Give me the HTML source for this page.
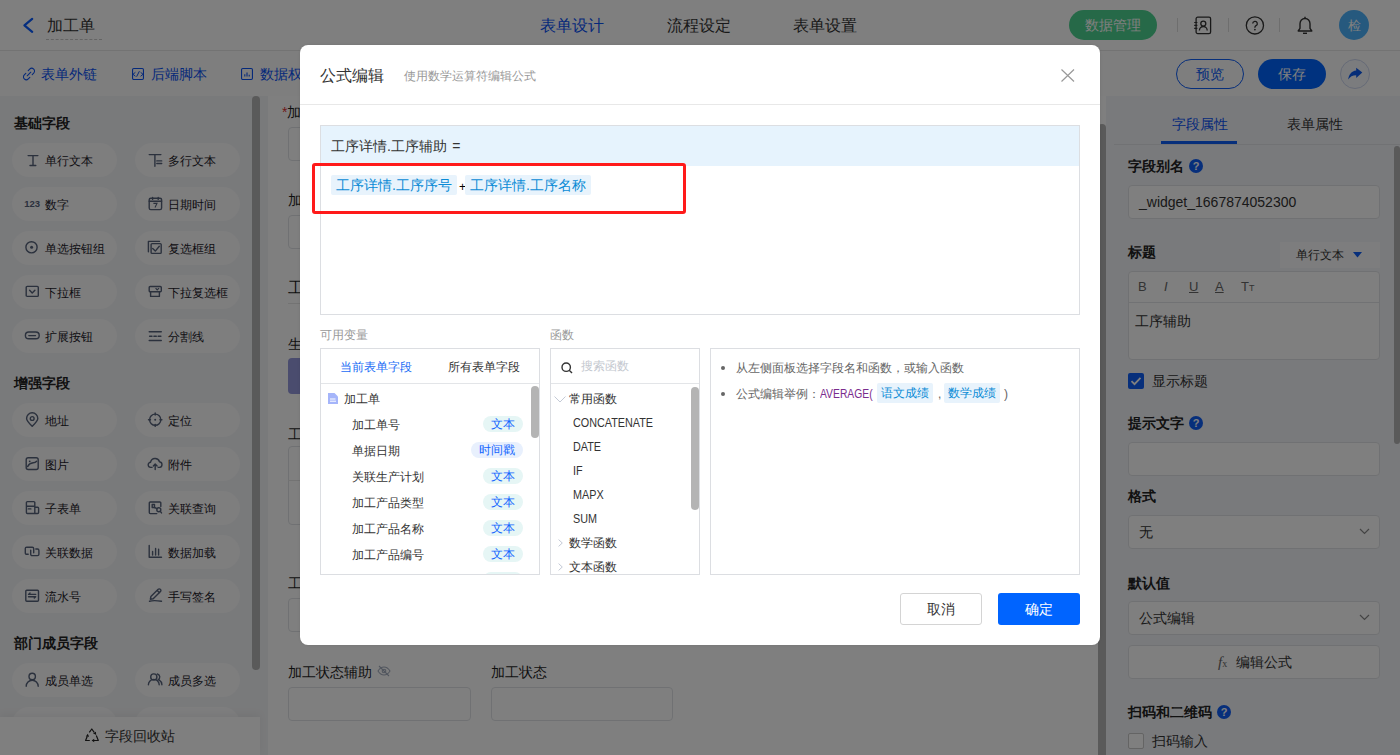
<!DOCTYPE html>
<html><head><meta charset="utf-8">
<style>
*{box-sizing:border-box;margin:0;padding:0}
html,body{width:1400px;height:755px;overflow:hidden;background:#fff}
body{font-family:"Liberation Sans",sans-serif;color:#333;position:relative}
.a{position:absolute;white-space:nowrap}
svg{display:block}
/* page */
#hdr{left:0;top:0;width:1400px;height:51px;background:#fff;border-bottom:1px solid #e6e6e6}
#tb{left:0;top:51px;width:1400px;height:45px;background:#fcfcfc}
#side{left:0;top:96px;width:268px;height:659px;background:#f3f4f6}
#canvas{left:268px;top:96px;width:838px;height:659px;background:#fff}
#rp{left:1106px;top:96px;width:294px;height:659px;background:#f3f5f9}
.t16{font-size:16px;line-height:20px}
.t14{font-size:14px;line-height:18px}
.t13{font-size:13px;line-height:16px}
.t12{font-size:12px;line-height:16px}
.pill{width:105px;height:34px;border-radius:17px;background:#fcfcfd}
.pill .ic{position:absolute;left:15px;top:10px;width:14px;height:14px}
.pill span{position:absolute;left:33px;top:9px;font-size:12px;line-height:18px;color:#1d2129}
.sech{font-size:14px;font-weight:bold;line-height:20px;color:#222}
.blue{color:#0a52f5}
.inp{background:#fff;border:1px solid #e1e3e6;border-radius:4px}
.lbl{font-size:14px;font-weight:500;line-height:20px;color:#1f1f1f}
#mask{left:0;top:0;width:1400px;height:755px;background:rgba(0,0,0,.5)}
/* dialog */
#dlg{left:300px;top:45px;width:800px;height:600px;background:#fff;border-radius:8px;box-shadow:0 0 3px rgba(0,0,0,.1)}
.box{border:1px solid #dcdee2}
.tag{background:#e8f3fc;color:#0a8bd6;border-radius:2px}
.vt{position:absolute;left:31px;margin-top:1px;font-size:12px;line-height:26px;color:#333}
.vtag{position:absolute;right:16px;height:16px;margin-top:-2px;border-radius:8px;font-size:12px;line-height:16px;padding:0 8px;color:#1466ff;background:#e6f6f5}
.fn{position:absolute;left:22px;font-size:12px;line-height:24px;color:#333;transform:scaleX(.9);transform-origin:0 0}
</style></head><body>
<!-- ============ PAGE ============ -->
<div id="hdr" class="a"></div>
<svg class="a" style="left:22px;top:17px" width="14" height="18" viewBox="0 0 14 18"><polyline points="10.2,1.9 2.4,8.4 10.2,14.9" fill="none" stroke="#0a5cff" stroke-width="2.2" stroke-linecap="round" stroke-linejoin="round"/></svg>
<div class="a t16" style="left:47px;top:16px;color:#333">加工单</div>
<div class="a" style="left:46px;top:39px;width:56px;border-top:1px dashed #c8c8c8"></div>
<div class="a t16 blue" style="left:540px;top:16px">表单设计</div>
<div class="a t16" style="left:667px;top:16px">流程设定</div>
<div class="a t16" style="left:793px;top:16px">表单设置</div>
<div class="a" style="left:1069px;top:10px;width:88px;height:30px;border-radius:15px;background:#4cd290;color:#fff;font-size:14px;line-height:30px;text-align:center">数据管理</div>
<div class="a" style="left:1177px;top:18px;width:1px;height:14px;background:#ddd"></div>
<div class="a" style="left:1228px;top:18px;width:1px;height:14px;background:#ddd"></div>
<div class="a" style="left:1279px;top:18px;width:1px;height:14px;background:#ddd"></div>
<svg class="a" style="left:1193px;top:15px" width="20" height="20" viewBox="0 0 20 20"><rect x="3.1" y="2.2" width="14.5" height="16.4" rx="1.6" fill="none" stroke="#333" stroke-width="1.3"/><path d="M1.2 7.5h3.2M1.2 10.4h3.2M1.2 13.3h3.2" stroke="#333" stroke-width="1.2"/><circle cx="10.3" cy="8.6" r="2.5" fill="none" stroke="#333" stroke-width="1.3"/><path d="M6.4 15.4a3.9 3.9 0 0 1 7.8 0" fill="none" stroke="#333" stroke-width="1.3"/></svg>
<svg class="a" style="left:1245px;top:15px" width="20" height="20" viewBox="0 0 20 20"><circle cx="9.9" cy="10.4" r="8.6" fill="none" stroke="#333" stroke-width="1.3"/><path d="M7.7 8.6a2.3 2.3 0 1 1 3.3 2.1c-.6.3-1.1.8-1.1 1.5v.5" fill="none" stroke="#333" stroke-width="1.3"/><circle cx="9.9" cy="14.6" r=".85" fill="#333"/></svg>
<svg class="a" style="left:1297px;top:16px" width="16" height="19" viewBox="0 0 16 19"><path d="M8 2.5c-3 0-5 2.3-5 5.3v4.5L1.2 15h13.6L13 12.3V7.8c0-3-2-5.3-5-5.3z" fill="none" stroke="#333" stroke-width="1.4" stroke-linejoin="round"/><path d="M6 17.3h4" stroke="#333" stroke-width="1.4"/><path d="M8 0.8v1.7" stroke="#333" stroke-width="1.4"/></svg>
<div class="a" style="left:1339px;top:10px;width:30px;height:30px;border-radius:15px;background:#4cb2fc;color:#fff;font-size:13px;line-height:32px;text-align:center">检</div>

<div id="tb" class="a"></div>
<svg class="a" style="left:22px;top:67px" width="14" height="14" viewBox="0 0 14 14"><path d="M6.2 3.6l1.5-1.5a2.8 2.8 0 0 1 4 4L10.2 7.6M7.8 10.4l-1.5 1.5a2.8 2.8 0 0 1-4-4L3.8 6.4M5.2 8.8l3.6-3.6" fill="none" stroke="#0a52f5" stroke-width="1.05" stroke-linecap="round"/></svg>
<div class="a t14 blue" style="left:41px;top:65px">表单外链</div>
<svg class="a" style="left:132px;top:68px" width="12" height="12" viewBox="0 0 12 12"><rect x=".55" y=".55" width="10.9" height="10.9" rx="1.2" fill="none" stroke="#0a52f5" stroke-width="1.1"/><path d="M3.4 4.3L1 6.3l2.4 2M4.6 8.7L7.4 3.2M8.6 4.3L11 6.3l-2.4 2" fill="none" stroke="#0a52f5" stroke-width="1"/></svg>
<div class="a t14 blue" style="left:151px;top:65px">后端脚本</div>
<svg class="a" style="left:241px;top:68px" width="12" height="12" viewBox="0 0 12 12"><rect x=".55" y=".55" width="10.9" height="10.9" rx="1.2" fill="none" stroke="#0a52f5" stroke-width="1.1"/><path d="M3.8 8.6V6.2M6 8.6V4.4M8.2 8.6V6.8" stroke="#0a52f5" stroke-width="1.1"/></svg>
<div class="a t14 blue" style="left:260px;top:65px">数据权限</div>
<div class="a" style="left:1176px;top:59px;width:68px;height:30px;border:1px solid #0f5ef7;border-radius:15px;color:#0f5ef7;font-size:14px;line-height:28px;text-align:center">预览</div>
<div class="a" style="left:1258px;top:59px;width:68px;height:30px;background:#0064ff;border-radius:15px;color:#fff;font-size:14px;line-height:30px;text-align:center">保存</div>
<div class="a" style="left:1340px;top:59px;width:30px;height:30px;border:1px solid #cdd6ee;background:#f6f8fd;border-radius:15px"></div>
<svg class="a" style="left:1346px;top:65px" width="18" height="18" viewBox="0 0 18 18"><path d="M10.2 2.7l6.1 4.8-6.1 5.5V10.2c-3.6 0-6.2 1.4-8 4.4.5-5 3.3-8.6 8-9.2z" fill="#0a5af0"/></svg>

<!-- sidebar -->
<div id="side" class="a"></div>
<div class="a sech" style="left:14px;top:113px">基础字段</div>
<div class="a pill" style="left:12px;top:143px"><svg class="a" style="left:10px;top:7px" width="20" height="20" viewBox="0 0 20 20"><path d="M6.1 5.6h9.8M11 5.6v9.9M8 15.5h5.8" fill="none" stroke="#56627a" stroke-width="1.4" stroke-linecap="round" stroke-linejoin="round"/></svg><span>单行文本</span></div>
<div class="a pill" style="left:135px;top:143px"><svg class="a" style="left:10px;top:7px" width="20" height="20" viewBox="0 0 20 20"><path d="M4.2 4.6h11.7M9.9 4.6v11.6M11.8 10.9h4.9M11.8 13.5h4.9" fill="none" stroke="#56627a" stroke-width="1.4" stroke-linecap="round" stroke-linejoin="round"/></svg><span>多行文本</span></div>
<div class="a pill" style="left:12px;top:187px"><svg class="a" style="left:10px;top:7px" width="20" height="20" viewBox="0 0 20 20"><text x="10.2" y="12.8" text-anchor="middle" font-family="Liberation Sans" font-weight="bold" font-size="9.5" fill="#56627a">123</text></svg><span>数字</span></div>
<div class="a pill" style="left:135px;top:187px"><svg class="a" style="left:10px;top:7px" width="20" height="20" viewBox="0 0 20 20"><rect x="4.2" y="4.2" width="12.4" height="11.4" rx="1.6" fill="none" stroke="#56627a" stroke-width="1.4" stroke-linecap="round" stroke-linejoin="round"/><path d="M4.2 7.3h12.4M7.6 3.4v2M13.2 3.4v2" fill="none" stroke="#56627a" stroke-width="1.4" stroke-linecap="round" stroke-linejoin="round"/><path d="M8.4 9.4h3.6l-2 4.2" fill="none" stroke="#56627a" stroke-width="1.1"/></svg><span>日期时间</span></div>
<div class="a pill" style="left:12px;top:231px"><svg class="a" style="left:10px;top:7px" width="20" height="20" viewBox="0 0 20 20"><circle cx="9.5" cy="9.3" r="5.6" fill="none" stroke="#56627a" stroke-width="1.4" stroke-linecap="round" stroke-linejoin="round"/><circle cx="9.6" cy="9.3" r="1.5" fill="#56627a"/></svg><span>单选按钮组</span></div>
<div class="a pill" style="left:135px;top:231px"><svg class="a" style="left:10px;top:7px" width="20" height="20" viewBox="0 0 20 20"><path d="M3.4 13.8V3.4h11.1" fill="none" stroke="#56627a" stroke-width="1.4" stroke-linecap="round" stroke-linejoin="round"/><rect x="6.1" y="5.6" width="10.1" height="9.8" rx="1" fill="none" stroke="#56627a" stroke-width="1.4" stroke-linecap="round" stroke-linejoin="round"/><path d="M7.7 10.5l2.6 2.6 4-4.9" fill="none" stroke="#56627a" stroke-width="1.4" stroke-linecap="round" stroke-linejoin="round"/></svg><span>复选框组</span></div>
<div class="a pill" style="left:12px;top:275px"><svg class="a" style="left:10px;top:7px" width="20" height="20" viewBox="0 0 20 20"><rect x="4.2" y="4.4" width="12.1" height="10" rx="1" fill="none" stroke="#56627a" stroke-width="1.4" stroke-linecap="round" stroke-linejoin="round"/><path d="M7.6 8.2l2.6 2.7 2.7-2.7" fill="none" stroke="#56627a" stroke-width="1.4" stroke-linecap="round" stroke-linejoin="round"/></svg><span>下拉框</span></div>
<div class="a pill" style="left:135px;top:275px"><svg class="a" style="left:10px;top:7px" width="20" height="20" viewBox="0 0 20 20"><rect x="4.2" y="4.5" width="12.1" height="5.3" rx="1" fill="none" stroke="#56627a" stroke-width="1.4" stroke-linecap="round" stroke-linejoin="round"/><path d="M5.6 9.8v4.6h8.8V9.8" fill="none" stroke="#56627a" stroke-width="1.4" stroke-linecap="round" stroke-linejoin="round"/><path d="M10.6 6.2l1.6 1.8 1.8-1.8" fill="none" stroke="#56627a" stroke-width="1.2"/></svg><span>下拉复选框</span></div>
<div class="a pill" style="left:12px;top:319px"><svg class="a" style="left:10px;top:7px" width="20" height="20" viewBox="0 0 20 20"><rect x="3.4" y="6" width="13.8" height="6.8" rx="3.4" fill="none" stroke="#56627a" stroke-width="1.4" stroke-linecap="round" stroke-linejoin="round"/><path d="M6.8 9.6h6.7" fill="none" stroke="#56627a" stroke-width="1.4" stroke-linecap="round" stroke-linejoin="round"/></svg><span>扩展按钮</span></div>
<div class="a pill" style="left:135px;top:319px"><svg class="a" style="left:10px;top:7px" width="20" height="20" viewBox="0 0 20 20"><path d="M4.2 5.7h12.1M4.2 14.5h12.1" fill="none" stroke="#56627a" stroke-width="1.4" stroke-linecap="round" stroke-linejoin="round"/><path d="M4.6 10.2h2.4M8.9 10.2h2.4M13.1 10.2h2.8" fill="none" stroke="#56627a" stroke-width="1.4" stroke-linecap="round" stroke-linejoin="round"/></svg><span>分割线</span></div>
<div class="a sech" style="left:14px;top:373px">增强字段</div>
<div class="a pill" style="left:12px;top:403px"><svg class="a" style="left:10px;top:7px" width="20" height="20" viewBox="0 0 20 20"><path d="M10.2 16.3C7 13 4.6 10.6 4.6 8.4a5.6 5.6 0 0 1 11.2 0c0 2.2-2.4 4.6-5.6 7.9z" fill="none" stroke="#56627a" stroke-width="1.4" stroke-linecap="round" stroke-linejoin="round"/><circle cx="10.2" cy="8.5" r="1.9" fill="none" stroke="#56627a" stroke-width="1.4" stroke-linecap="round" stroke-linejoin="round"/></svg><span>地址</span></div>
<div class="a pill" style="left:135px;top:403px"><svg class="a" style="left:10px;top:7px" width="20" height="20" viewBox="0 0 20 20"><circle cx="10.2" cy="9.7" r="5.6" fill="none" stroke="#56627a" stroke-width="1.4" stroke-linecap="round" stroke-linejoin="round"/><path d="M10.2 3v2M10.2 14.4v2M3.5 9.7h2M14.9 9.7h2" fill="none" stroke="#56627a" stroke-width="1.4" stroke-linecap="round" stroke-linejoin="round"/><circle cx="10.2" cy="9.7" r="1" fill="#56627a"/></svg><span>定位</span></div>
<div class="a pill" style="left:12px;top:447px"><svg class="a" style="left:10px;top:7px" width="20" height="20" viewBox="0 0 20 20"><rect x="4.2" y="3.7" width="12" height="11.8" rx="2" fill="none" stroke="#56627a" stroke-width="1.4" stroke-linecap="round" stroke-linejoin="round"/><path d="M5.6 12.6c1.5-3.2 4-3.6 5.6-3.8 1.5-.2 2.5-.6 3.4-1.6" fill="none" stroke="#56627a" stroke-width="1.4" stroke-linecap="round" stroke-linejoin="round"/><circle cx="7.7" cy="7.3" r=".9" fill="#56627a"/></svg><span>图片</span></div>
<div class="a pill" style="left:135px;top:447px"><svg class="a" style="left:10px;top:7px" width="20" height="20" viewBox="0 0 20 20"><path d="M7 13.4H6a2.6 2.6 0 0 1-.4-5.2 4.6 4.6 0 0 1 8.9-.5 2.9 2.9 0 0 1 .2 5.7h-1.5" fill="none" stroke="#56627a" stroke-width="1.4" stroke-linecap="round" stroke-linejoin="round"/><path d="M10.2 15.5v-5M8.3 12l1.9-1.9 1.9 1.9" fill="none" stroke="#56627a" stroke-width="1.4" stroke-linecap="round" stroke-linejoin="round"/></svg><span>附件</span></div>
<div class="a pill" style="left:12px;top:491px"><svg class="a" style="left:10px;top:7px" width="20" height="20" viewBox="0 0 20 20"><path d="M12.8 9.3V4.6a1 1 0 0 0-1-1H5.4a1 1 0 0 0-1 1v9.9a1 1 0 0 0 1 1h10.2a1 1 0 0 0 1-1V10.3a1 1 0 0 0-1-1h-2.8v6.2M4.4 8.2h8.4M6.3 10.9h2.6" fill="none" stroke="#56627a" stroke-width="1.4" stroke-linecap="round" stroke-linejoin="round"/></svg><span>子表单</span></div>
<div class="a pill" style="left:135px;top:491px"><svg class="a" style="left:10px;top:7px" width="20" height="20" viewBox="0 0 20 20"><path d="M15.8 8.4V5a1 1 0 0 0-1-1H5.3a1 1 0 0 0-1 1v9.6a1 1 0 0 0 1 1h6.5" fill="none" stroke="#56627a" stroke-width="1.4" stroke-linecap="round" stroke-linejoin="round"/><rect x="7.2" y="6.5" width="2.3" height="3" fill="none" stroke="#56627a" stroke-width="1.4" stroke-linecap="round" stroke-linejoin="round"/><circle cx="13.8" cy="11.8" r="2" fill="none" stroke="#56627a" stroke-width="1.4" stroke-linecap="round" stroke-linejoin="round"/><path d="M9.5 9.5l2.6 1.2M15.2 13.3l1.3 1.6" fill="none" stroke="#56627a" stroke-width="1.4" stroke-linecap="round" stroke-linejoin="round"/></svg><span>关联查询</span></div>
<div class="a pill" style="left:12px;top:535px"><svg class="a" style="left:10px;top:7px" width="20" height="20" viewBox="0 0 20 20"><path d="M6.2 12.3H4.7a1.4 1.4 0 0 1-1.4-1.4V6.6a1.4 1.4 0 0 1 1.4-1.4h5.6a1.4 1.4 0 0 1 1.4 1.4v4.1M8.7 8.2v4a1.4 1.4 0 0 0 1.4 1.4h5.4a1.4 1.4 0 0 0 1.4-1.4V8.4A1.4 1.4 0 0 0 15.5 7h-1.7" fill="none" stroke="#56627a" stroke-width="1.4" stroke-linecap="round" stroke-linejoin="round"/></svg><span>关联数据</span></div>
<div class="a pill" style="left:135px;top:535px"><svg class="a" style="left:10px;top:7px" width="20" height="20" viewBox="0 0 20 20"><path d="M4.2 3.4v11.9h12.3M7.6 9.4v3.6M10.6 6.4v6.6M13.6 7.2v5.8" fill="none" stroke="#56627a" stroke-width="1.4" stroke-linecap="round" stroke-linejoin="round"/></svg><span>数据加载</span></div>
<div class="a pill" style="left:12px;top:579px"><svg class="a" style="left:10px;top:7px" width="20" height="20" viewBox="0 0 20 20"><rect x="3.8" y="4.3" width="12.7" height="10.9" rx="1" fill="none" stroke="#56627a" stroke-width="1.4" stroke-linecap="round" stroke-linejoin="round"/><path d="M8 7l-1.5 1.4h7.2M12.3 12l1.4-1.3H6.5" fill="none" stroke="#56627a" stroke-width="1.4" stroke-linecap="round" stroke-linejoin="round"/></svg><span>流水号</span></div>
<div class="a pill" style="left:135px;top:579px"><svg class="a" style="left:10px;top:7px" width="20" height="20" viewBox="0 0 20 20"><path d="M5.4 13.2l.5-2.7 7.3-7.2a1.4 1.4 0 0 1 2 0l.3.3a1.4 1.4 0 0 1 0 2l-7.3 7.2zM4.5 15.2c3-.8 6.4-.8 12 0M12.2 4.4l2.3 2.3" fill="none" stroke="#56627a" stroke-width="1.4" stroke-linecap="round" stroke-linejoin="round"/></svg><span>手写签名</span></div>
<div class="a sech" style="left:14px;top:633px">部门成员字段</div>
<div class="a pill" style="left:12px;top:663px"><svg class="a" style="left:10px;top:7px" width="20" height="20" viewBox="0 0 20 20"><circle cx="10.2" cy="6.5" r="3.2" fill="none" stroke="#56627a" stroke-width="1.4" stroke-linecap="round" stroke-linejoin="round"/><path d="M4.2 16.2a6 6 0 0 1 12 0" fill="none" stroke="#56627a" stroke-width="1.4" stroke-linecap="round" stroke-linejoin="round"/></svg><span>成员单选</span></div>
<div class="a pill" style="left:135px;top:663px"><svg class="a" style="left:10px;top:7px" width="20" height="20" viewBox="0 0 20 20"><circle cx="8.8" cy="7" r="3.1" fill="none" stroke="#56627a" stroke-width="1.4" stroke-linecap="round" stroke-linejoin="round"/><path d="M3.4 14.8a5.4 5.4 0 0 1 10.8 0M12.4 4a3.1 3.1 0 0 1 .6 5.8M14.3 10.2a5.4 5.4 0 0 1 2.6 4.6" fill="none" stroke="#56627a" stroke-width="1.4" stroke-linecap="round" stroke-linejoin="round"/></svg><span>成员多选</span></div>
<div class="a pill" style="left:12px;top:707px"></div>
<div class="a pill" style="left:135px;top:707px"></div>
<div class="a" style="left:252px;top:96px;width:8px;height:574px;border-radius:4px;background:#b4b4b4"></div>
<div class="a" style="left:0;top:717px;width:260px;height:38px;background:#fefefe;box-shadow:0 -3px 8px rgba(0,0,0,.05)"></div>
<svg class="a" style="left:80px;top:724px" width="24" height="24" viewBox="0 0 24 24"><path d="M9.3 8.3l2.5-3.3 2.4 3.4M16.3 11.6l2 4.9h-4.8M9.8 16.5H5.6l1.6-4" fill="none" stroke="#222" stroke-width="1.2" stroke-linejoin="round"/><path d="M13 9.3l2.9-1.5.3 3.2zM14.2 14.7v3.6l-2.6-1.8zM5.8 12.4l2-2.6 1.3 3z" fill="#222"/></svg>
<div class="a t14" style="left:105px;top:727px">字段回收站</div>

<!-- canvas -->
<div id="canvas" class="a"></div>
<div class="a lbl" style="left:282px;top:102px"><span style="color:#e03030">*</span>加工单号</div>
<div class="a inp" style="left:288px;top:127px;width:183px;height:34px"></div>
<div class="a lbl" style="left:288px;top:190px">加工日期</div>
<div class="a inp" style="left:288px;top:215px;width:183px;height:34px"></div>
<div class="a" style="left:288px;top:278px;font-size:16px;font-weight:500;line-height:20px;color:#1f1f1f">工序详情</div>
<div class="a" style="left:288px;top:303px;width:792px;height:1px;background:#e6e6e6"></div>
<div class="a lbl" style="left:288px;top:334px">生产</div>
<div class="a" style="left:288px;top:358px;width:120px;height:36px;border-radius:4px;background:#9499dd"></div>
<div class="a lbl" style="left:288px;top:424px">工序</div>
<div class="a inp" style="left:288px;top:446px;width:792px;height:79px"></div>
<div class="a" style="left:288px;top:480px;width:792px;height:1px;background:#e6e6e6"></div>
<div class="a lbl" style="left:288px;top:573px">工序</div>
<div class="a inp" style="left:288px;top:598px;width:183px;height:34px"></div>
<div class="a lbl" style="left:288px;top:662px">加工状态辅助</div>
<svg class="a" style="left:377px;top:665px" width="14" height="12" viewBox="0 0 14 12"><path d="M1 6c1.6-2.6 3.6-4 6-4s4.4 1.4 6 4c-1.6 2.6-3.6 4-6 4S2.6 8.6 1 6z" fill="none" stroke="#a3acbd" stroke-width="1.1"/><circle cx="7" cy="6" r="1.8" fill="none" stroke="#a3acbd" stroke-width="1.1"/><path d="M2 1l10 10" stroke="#a3acbd" stroke-width="1.1"/></svg>
<div class="a inp" style="left:288px;top:687px;width:183px;height:34px"></div>
<div class="a lbl" style="left:491px;top:662px">加工状态</div>
<div class="a inp" style="left:491px;top:687px;width:182px;height:34px"></div>
<div class="a" style="left:1098px;top:124px;width:8px;height:640px;border-radius:4px;background:#b4b4b4"></div>

<!-- right panel -->
<div id="rp" class="a"></div>
<div class="a t14 blue" style="left:1172px;top:115px">字段属性</div>
<div class="a t14" style="left:1287px;top:115px">表单属性</div>
<div class="a" style="left:1114px;top:144px;width:286px;height:1px;background:#e3e5e8"></div>
<div class="a" style="left:1161px;top:141px;width:76px;height:3px;background:#0f5ef7"></div>
<div class="a" style="left:1394px;top:146px;width:6px;height:298px;border-radius:3px;background:#b4b4b4"></div>
<div class="a lbl" style="font-weight:bold;color:#222;left:1128px;top:156px">字段别名</div>
<div class="a" style="left:1189px;top:159px;width:14px;height:14px;border-radius:7px;background:#0f5ef7;color:#fff;font-size:11px;line-height:14px;text-align:center;font-weight:bold">?</div>
<div class="a inp" style="left:1128px;top:185px;width:252px;height:34px;font-size:14px;line-height:32px;padding-left:10px;color:#333">_widget_1667874052300</div>
<div class="a lbl" style="font-weight:bold;color:#222;left:1128px;top:242px">标题</div>
<div class="a" style="left:1280px;top:242px;width:100px;height:26px;background:#fbfbfc"></div>
<div class="a t12" style="left:1296px;top:247px">单行文本</div>
<svg class="a" style="left:1353px;top:252px" width="9" height="6" viewBox="0 0 9 6"><path d="M0 0h9L4.5 5.5z" fill="#0f5ef7"/></svg>
<div class="a inp" style="left:1128px;top:271px;width:252px;height:89px"></div>
<div class="a" style="left:1129px;top:302px;width:250px;height:1px;background:#e3e5e8"></div>
<div class="a" style="left:1138px;top:279px;font-size:13px;line-height:16px;color:#666">B</div>
<div class="a" style="left:1164px;top:279px;font-size:13px;line-height:16px;color:#666;font-style:italic">I</div>
<div class="a" style="left:1189px;top:279px;font-size:13px;line-height:16px;color:#666;text-decoration:underline">U</div>
<div class="a" style="left:1215px;top:279px;font-size:13px;line-height:16px;color:#666;text-decoration:underline">A</div>
<div class="a" style="left:1241px;top:279px;font-size:13px;line-height:16px;color:#666">T<span style="font-size:9px">T</span></div>
<div class="a t14" style="left:1135px;top:312px">工序辅助</div>
<div class="a" style="left:1128px;top:373px;width:16px;height:16px;border-radius:2px;background:#0f5ef7"></div>
<svg class="a" style="left:1128px;top:373px" width="16" height="16" viewBox="0 0 16 16"><path d="M3.5 8.2l3 3 6-6.4" fill="none" stroke="#fff" stroke-width="1.8"/></svg>
<div class="a t14" style="left:1152px;top:372px">显示标题</div>
<div class="a lbl" style="font-weight:bold;color:#222;left:1128px;top:413px">提示文字</div>
<div class="a" style="left:1189px;top:416px;width:14px;height:14px;border-radius:7px;background:#0f5ef7;color:#fff;font-size:11px;line-height:14px;text-align:center;font-weight:bold">?</div>
<div class="a inp" style="left:1128px;top:442px;width:252px;height:34px"></div>
<div class="a lbl" style="font-weight:bold;color:#222;left:1128px;top:486px">格式</div>
<div class="a inp" style="left:1128px;top:515px;width:252px;height:34px;font-size:14px;line-height:32px;padding-left:10px">无</div>
<svg class="a" style="left:1359px;top:528px" width="11" height="7" viewBox="0 0 11 7"><path d="M1 1l4.5 4.5L10 1" fill="none" stroke="#888" stroke-width="1.2"/></svg>
<div class="a lbl" style="font-weight:bold;color:#222;left:1128px;top:573px">默认值</div>
<div class="a inp" style="left:1128px;top:601px;width:252px;height:34px;font-size:14px;line-height:32px;padding-left:10px">公式编辑</div>
<svg class="a" style="left:1359px;top:614px" width="11" height="7" viewBox="0 0 11 7"><path d="M1 1l4.5 4.5L10 1" fill="none" stroke="#888" stroke-width="1.2"/></svg>
<div class="a inp" style="left:1128px;top:645px;width:252px;height:34px"></div>
<div class="a" style="left:1218px;top:652px;font-family:'Liberation Serif',serif;font-style:italic;font-size:15px;line-height:20px;color:#666">f<span style="font-size:10px;font-style:normal">x</span></div>
<div class="a t14" style="left:1236px;top:653px">编辑公式</div>
<div class="a lbl" style="font-weight:bold;color:#222;left:1128px;top:702px">扫码和二维码</div>
<div class="a" style="left:1217px;top:705px;width:14px;height:14px;border-radius:7px;background:#0f5ef7;color:#fff;font-size:11px;line-height:14px;text-align:center;font-weight:bold">?</div>
<div class="a" style="left:1128px;top:733px;width:16px;height:16px;border:1px solid #c8c8c8;border-radius:2px;background:#fff"></div>
<div class="a t14" style="left:1152px;top:732px">扫码输入</div>

<div id="mask" class="a"></div>

<!-- ============ DIALOG ============ -->
<div id="dlg" class="a">
  <div class="a" style="left:20px;top:20px;font-size:16px;line-height:22px;color:#333">公式编辑</div>
  <div class="a" style="left:104px;top:23px;font-size:12px;line-height:16px;color:#999">使用数学运算符编辑公式</div>
  <svg class="a" style="left:761px;top:24px" width="14" height="13" viewBox="0 0 14 13"><path d="M.5.5l12.5 12M13 .5L.5 12.5" stroke="#999" stroke-width="1.2"/></svg>
  <div class="a" style="left:0;top:59px;width:800px;height:1px;background:#e8e8e8"></div>
  <!-- editor -->
  <div class="a box" style="left:20px;top:80px;width:760px;height:190px"></div>
  <div class="a" style="left:21px;top:81px;width:758px;height:40px;background:#e6f3fd"></div>
  <div class="a" style="left:31px;top:92px;font-size:14px;line-height:18px;color:#333">工序详情.工序辅助 <span style="margin-left:1.5px">=</span></div>
  <div class="a tag" style="left:31px;top:130px;width:126px;height:20px;font-size:14px;line-height:20px;padding-left:5px">工序详情.工序序号</div>
  <div class="a" style="left:159px;top:132px;font-size:12px;line-height:20px;color:#000">+</div>
  <div class="a tag" style="left:165px;top:130px;width:126px;height:20px;font-size:14px;line-height:20px;padding-left:5px">工序详情.工序名称</div>
  <div class="a" style="left:12px;top:118px;width:374px;height:51px;border:3px solid #ff1a1a;border-radius:3px"></div>
  <!-- variables -->
  <div class="a t12" style="left:20px;top:282px;color:#999">可用变量</div>
  <div class="a box" style="left:20px;top:303px;width:220px;height:227px"></div>
  <div class="a" style="left:21px;top:338px;width:218px;height:1px;background:#e3e5e8"></div>
  <div class="a" style="left:40px;top:314px;font-size:12px;line-height:16px;color:#1a6cf5">当前表单字段</div>
  <div class="a" style="left:148px;top:314px;font-size:12px;line-height:16px;color:#333">所有表单字段</div>
  <div class="a" style="left:21px;top:340px;width:218px;height:189px;overflow:hidden">
    <svg class="a" style="left:7px;top:8px" width="10" height="11" viewBox="0 0 10 11"><path d="M0 0h6.5L10 3.5V11H0z" fill="#a5b5fa"/><path d="M2 6h5.5M2 8.2h6" stroke="#fff" stroke-width="1"/></svg>
    <div class="a" style="left:23px;top:1px;font-size:12px;line-height:26px;color:#333">加工单</div>
    <div class="vt" style="top:26px">加工单号</div><div class="vtag" style="top:33px">文本</div>
    <div class="vt" style="top:52px">单据日期</div><div class="vtag" style="top:59px;background:#e8f0fd">时间戳</div>
    <div class="vt" style="top:78px">关联生产计划</div><div class="vtag" style="top:85px">文本</div>
    <div class="vt" style="top:104px">加工产品类型</div><div class="vtag" style="top:111px">文本</div>
    <div class="vt" style="top:130px">加工产品名称</div><div class="vtag" style="top:137px">文本</div>
    <div class="vt" style="top:156px">加工产品编号</div><div class="vtag" style="top:163px">文本</div>
    <div class="vtag" style="top:189px">文本</div>
    <div class="a" style="left:210px;top:1px;width:8px;height:52px;border-radius:4px;background:#b4b4b4"></div>
  </div>
  <!-- functions -->
  <div class="a t12" style="left:250px;top:282px;color:#999">函数</div>
  <div class="a box" style="left:250px;top:303px;width:150px;height:227px"></div>
  <div class="a" style="left:251px;top:338px;width:148px;height:1px;background:#e3e5e8"></div>
  <svg class="a" style="left:261px;top:317px" width="12" height="12" viewBox="0 0 12 12"><circle cx="5.2" cy="5.2" r="4.2" fill="none" stroke="#333" stroke-width="1.4"/><path d="M8.2 8.2l2.8 2.8" stroke="#333" stroke-width="1.4"/></svg>
  <div class="a" style="left:281px;top:313px;font-size:12px;line-height:16px;color:#c4c8cf">搜索函数</div>
  <div class="a" style="left:251px;top:340px;width:148px;height:189px;overflow:hidden;padding-top:2px">
    <svg class="a" style="left:3px;top:11px" width="12" height="7" viewBox="0 0 12 7"><path d="M.5.5L6 6 11.5.5" fill="none" stroke="#c4cad6" stroke-width="1"/></svg>
    <div class="a" style="left:18px;top:2px;font-size:12px;line-height:24px;color:#333">常用函数</div>
    <div class="fn" style="top:26px">CONCATENATE</div>
    <div class="fn" style="top:50px">DATE</div>
    <div class="fn" style="top:74px">IF</div>
    <div class="fn" style="top:98px">MAPX</div>
    <div class="fn" style="top:122px">SUM</div>
    <svg class="a" style="left:7px;top:154px" width="5" height="8" viewBox="0 0 5 8"><path d="M.6.6L4.3 4 .6 7.4" fill="none" stroke="#c3c9d6" stroke-width="1"/></svg>
    <div class="a" style="left:18px;top:146px;font-size:12px;line-height:24px;color:#333">数学函数</div>
    <svg class="a" style="left:7px;top:178px" width="5" height="8" viewBox="0 0 5 8"><path d="M.6.6L4.3 4 .6 7.4" fill="none" stroke="#c3c9d6" stroke-width="1"/></svg>
    <div class="a" style="left:18px;top:170px;font-size:12px;line-height:24px;color:#333">文本函数</div>
    <div class="a" style="left:140px;top:2px;width:8px;height:123px;border-radius:4px;background:#b4b4b4"></div>
  </div>
  <!-- hints -->
  <div class="a box" style="left:410px;top:303px;width:370px;height:227px"></div>
  <div class="a" style="left:421px;top:321px;width:4px;height:4px;border-radius:2px;background:#666"></div>
  <div class="a" style="left:436px;top:315px;font-size:12px;line-height:16px;color:#666">从左侧面板选择字段名和函数，或输入函数</div>
  <div class="a" style="left:421px;top:347px;width:4px;height:4px;border-radius:2px;background:#666"></div>
  <div class="a" style="left:436px;top:341px;font-size:12px;line-height:16px;color:#666">公式编辑举例：</div><div class="a" style="left:520px;top:341px;font-size:12px;line-height:16px;color:#7a2c8e;transform:scaleX(.86);transform-origin:0 0">AVERAGE(</div>
  <div class="a tag" style="left:577px;top:338px;width:56px;height:20px;font-size:12px;line-height:20px;text-align:center">语文成绩</div>
  <div class="a" style="left:638px;top:341px;font-size:12px;line-height:16px;color:#666">,</div>
  <div class="a tag" style="left:644px;top:338px;width:56px;height:20px;font-size:12px;line-height:20px;text-align:center">数学成绩</div>
  <div class="a" style="left:704px;top:341px;font-size:12px;line-height:16px;color:#666">)</div>
  <!-- footer -->
  <div class="a" style="left:600px;top:548px;width:82px;height:32px;border:1px solid #d4d4d4;border-radius:3px;font-size:14px;line-height:30px;text-align:center;color:#333">取消</div>
  <div class="a" style="left:698px;top:548px;width:82px;height:32px;background:#0064ff;border-radius:3px;font-size:14px;line-height:32px;text-align:center;color:#fff;font-weight:500">确定</div>
</div>
</body></html>
